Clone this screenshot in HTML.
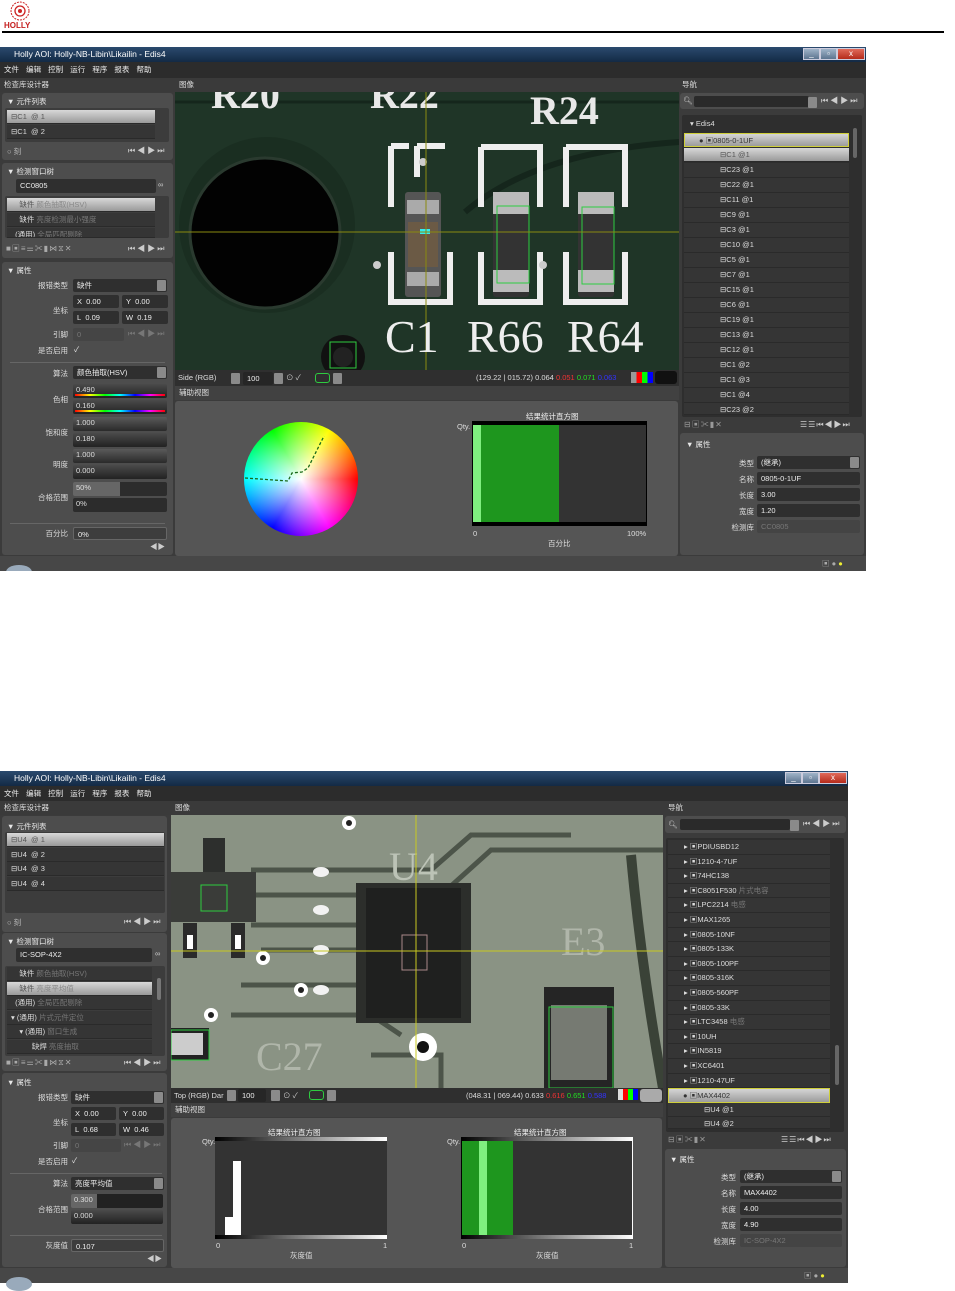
<!DOCTYPE html>
<html><head><meta charset="utf-8"><style>
*{margin:0;padding:0;box-sizing:border-box}
body{width:955px;height:1283px;background:#fff;position:relative;overflow:hidden;font-family:"Liberation Sans","Noto Sans CJK SC",sans-serif;font-size:7.5px;color:#e8e8e8}
.a{position:absolute}
.win{background:#3b3b3b}
.title{background:linear-gradient(#2b4a6e,#132a45);color:#fff;font-size:8.5px;line-height:15px;padding-left:14px}
.menu{background:#2c2c2c;color:#eee;font-size:7.5px;line-height:15px;padding-left:4px;word-spacing:5px}
.hdr{background:#3a3a3a;color:#ddd;line-height:13px;padding-left:4px}
.pan{background:#4d4d4d;border-radius:3px}
.box{background:#3c3c3c;border-radius:2px}
.row{background:#353535;border-bottom:1px solid #2a2a2a;line-height:14px;padding-left:4px;color:#ddd;height:14px}
.sel{background:linear-gradient(#d8d8d8,#9a9a9a);color:#555}
.fld{background:#2f2f2f;border-radius:2px;line-height:13px;padding-left:4px;color:#eee;height:13px}
.lbl{text-align:right;color:#ddd;line-height:13px}
.dd{background:#8a8a8a;width:9px;height:11px;border-radius:1px}
.sl{background:linear-gradient(#4a4a4a,#222);border-radius:2px;height:14px;color:#ddd;padding-left:3px;line-height:11px}
.sep{height:1px;background:#666}
.nav{color:#ccc;letter-spacing:2px;font-size:8px}
.tb{background:#2f2f2f}
.wb{background:linear-gradient(#9fb3c8,#5d7590);border:1px solid #ccd;height:12px;width:17px;color:#fff;text-align:center;line-height:10px;font-size:8px}
</style></head><body>

<!-- top header -->
<svg class="a" style="left:8px;top:0px" width="34" height="24"><circle cx="12" cy="11" r="9" fill="none" stroke="#c22" stroke-width="1" stroke-dasharray="2 1"/><circle cx="12" cy="11" r="5" fill="none" stroke="#c22" stroke-width="1.3"/><circle cx="12" cy="11" r="2" fill="#c22"/></svg>
<div class="a" style="left:4px;top:21px;color:#c41e1e;font-weight:bold;font-size:8px">HOLLY</div>
<div class="a" style="left:2px;top:31px;width:942px;height:2px;background:#000"></div>

<!-- ============ SCREEN 1 ============ -->
<div class="a win" style="left:0;top:47px;width:866px;height:524px"></div>
<div class="a title" style="left:0;top:47px;width:866px;height:15px">Holly AOI: Holly-NB-Libin\Likailin - Edis4</div>
<div class="a wb" style="left:803px;top:48px">_</div>
<div class="a wb" style="left:820px;top:48px">▫</div>
<div class="a wb" style="left:837px;top:48px;width:28px;background:linear-gradient(#e06a5a,#b52b1b)">x</div>
<div class="a menu" style="left:0;top:62px;width:866px;height:16px">文件 编辑 控制 运行 程序 报表 帮助</div>
<div class="a hdr" style="left:0;top:78px;width:175px;height:14px">检查库设计器</div>
<div class="a hdr" style="left:175px;top:78px;width:505px;height:14px">图像</div>
<div class="a hdr" style="left:678px;top:78px;width:188px;height:14px">导航</div>

<!-- left panel 1 -->
<div class="a pan" style="left:2px;top:93px;width:171px;height:67px"></div>
<div class="a" style="left:7px;top:96px">▼ 元件列表</div>
<div class="a box" style="left:5px;top:108px;width:164px;height:34px"></div>
<div class="a row sel" style="left:7px;top:110px;width:148px">⊟C1 &nbsp;@ 1</div>
<div class="a row" style="left:7px;top:125px;width:148px">⊟C1 &nbsp;@ 2</div>
<div class="a" style="left:7px;top:146px;color:#bbb">○ 刻</div>
<div class="a nav" style="left:128px;top:145px">⏮◀▶⏭</div>
<div class="a pan" style="left:2px;top:163px;width:171px;height:95px"></div>
<div class="a" style="left:7px;top:166px">▼ 检测窗口树</div>
<div class="a fld" style="left:16px;top:179px;width:140px;height:14px">CC0805</div>
<div class="a" style="left:158px;top:180px;color:#ccc">∞</div>
<div class="a box" style="left:5px;top:196px;width:164px;height:42px"></div>
<div class="a row sel" style="left:7px;top:198px;width:148px">&nbsp;&nbsp;&nbsp;&nbsp;缺件 <span style="color:#888">颜色抽取(HSV)</span></div>
<div class="a row" style="left:7px;top:213px;width:148px">&nbsp;&nbsp;&nbsp;&nbsp;缺件 <span style="color:#777">亮度检测最小强度</span></div>
<div class="a row" style="left:7px;top:228px;width:148px;height:10px;overflow:hidden">&nbsp;&nbsp;(通用) <span style="color:#777">全局匹配剔除</span></div>
<div class="a nav" style="left:6px;top:243px;color:#aaa;letter-spacing:1px">■▣≡⚌✂▮⋈⧖✕</div>
<div class="a nav" style="left:128px;top:243px">⏮◀▶⏭</div>

<div class="a pan" style="left:2px;top:262px;width:171px;height:293px"></div>
<div class="a" style="left:7px;top:265px">▼ 属性</div>
<div class="a lbl" style="left:10px;top:279px;width:58px">报错类型</div>
<div class="a fld" style="left:73px;top:279px;width:94px">缺件</div><div class="a dd" style="left:157px;top:280px"></div>
<div class="a lbl" style="left:10px;top:304px;width:58px">坐标</div>
<div class="a fld" style="left:73px;top:295px;width:46px">X&nbsp; 0.00</div>
<div class="a fld" style="left:122px;top:295px;width:46px">Y&nbsp; 0.00</div>
<div class="a fld" style="left:73px;top:311px;width:46px">L&nbsp; 0.09</div>
<div class="a fld" style="left:122px;top:311px;width:46px">W&nbsp; 0.19</div>
<div class="a lbl" style="left:10px;top:328px;width:58px">引脚</div>
<div class="a fld" style="left:73px;top:328px;width:51px;background:#454545;color:#777">0</div>
<div class="a nav" style="left:128px;top:328px;color:#777">⏮◀▶⏭</div>
<div class="a lbl" style="left:10px;top:344px;width:58px">是否启用</div>
<div class="a" style="left:74px;top:344px">✓</div>
<div class="a sep" style="left:10px;top:362px;width:155px"></div>
<div class="a lbl" style="left:10px;top:367px;width:58px">算法</div>
<div class="a fld" style="left:73px;top:366px;width:94px">颜色抽取(HSV)</div><div class="a dd" style="left:157px;top:367px"></div>
<div class="a lbl" style="left:10px;top:393px;width:58px">色相</div>
<div class="a sl" style="left:73px;top:384px;width:94px">0.490<div class="a" style="left:2px;top:10px;width:90px;height:2px;background:linear-gradient(90deg,red,yellow,lime,cyan,blue,magenta,red)"></div></div>
<div class="a sl" style="left:73px;top:400px;width:94px">0.160<div class="a" style="left:2px;top:10px;width:90px;height:2px;background:linear-gradient(90deg,red,yellow,lime,cyan,blue,magenta,red)"></div></div>
<div class="a lbl" style="left:10px;top:426px;width:58px">饱和度</div>
<div class="a sl" style="left:73px;top:417px;width:94px;background:linear-gradient(#5a5a5a,#2a2a2a)">1.000</div>
<div class="a sl" style="left:73px;top:433px;width:94px">0.180</div>
<div class="a lbl" style="left:10px;top:458px;width:58px">明度</div>
<div class="a sl" style="left:73px;top:449px;width:94px;background:linear-gradient(#5a5a5a,#2a2a2a)">1.000</div>
<div class="a sl" style="left:73px;top:465px;width:94px">0.000</div>
<div class="a lbl" style="left:10px;top:491px;width:58px">合格范围</div>
<div class="a sl" style="left:73px;top:482px;width:94px;background:linear-gradient(90deg,#666 50%,#2c2c2c 50%)">50%</div>
<div class="a sl" style="left:73px;top:498px;width:94px;background:#2c2c2c">0%</div>
<div class="a sep" style="left:10px;top:523px;width:155px"></div>
<div class="a lbl" style="left:10px;top:527px;width:58px">百分比</div>
<div class="a fld" style="left:73px;top:527px;width:94px;background:#3d3d3d;border:1px solid #666">0%</div>
<div class="a" style="left:150px;top:541px;color:#ccc">◀▶</div>

<!-- image 1 -->
<svg class="a" style="left:175px;top:92px" width="504" height="278" viewBox="0 0 504 278">
<rect width="504" height="278" fill="#1f3527"/>
<path d="M290 120 Q360 60 504 50" stroke="#15261c" stroke-width="6" fill="none"/>
<path d="M0 10 H504" stroke="#15261c" stroke-width="3"/>
<circle cx="92" cy="133" r="88" fill="#1a2e21"/>
<circle cx="90" cy="141" r="75" fill="#020202" stroke="#2a3a2f" stroke-width="3"/>
<circle cx="168" cy="265" r="22" fill="#111"/><circle cx="168" cy="265" r="10" fill="#222"/>
<rect x="155" y="250" width="26" height="26" fill="none" stroke="#2ecc40" stroke-width="1"/>
<text x="36" y="16" fill="#e8e8e8" font-family="Liberation Serif" font-size="40" font-weight="bold">R20</text>
<text x="195" y="16" fill="#e8e8e8" font-family="Liberation Serif" font-size="40" font-weight="bold">R22</text>
<text x="355" y="32" fill="#e8e8e8" font-family="Liberation Serif" font-size="40" font-weight="bold">R24</text>
<g fill="none" stroke="#eee" stroke-width="6">
<path d="M242 54 V85 M242 54 H270 M216 54 H234 M216 54 V115 M216 160 V210 H275 V160"/>
<path d="M306 55 V115 M306 160 V210 H365 V160 M306 55 H365 V115"/>
<path d="M391 55 V115 M391 160 V210 H450 V160 M391 55 H450 V115"/>
</g>
<circle cx="248" cy="70" r="4" fill="#ccc"/><circle cx="202" cy="173" r="4" fill="#ccc"/><circle cx="368" cy="173" r="4" fill="#ccc"/>
<rect x="230" y="100" width="36" height="105" fill="#555" rx="3"/>
<rect x="233" y="130" width="30" height="45" fill="#6b5a45"/>
<rect x="232" y="108" width="32" height="14" fill="#aaa"/><rect x="232" y="180" width="32" height="14" fill="#aaa"/>
<rect x="318" y="100" width="36" height="105" fill="#333" rx="3"/>
<rect x="318" y="100" width="36" height="22" fill="#bbb"/><rect x="318" y="178" width="36" height="22" fill="#bbb"/>
<rect x="403" y="100" width="36" height="105" fill="#333" rx="3"/>
<rect x="403" y="100" width="36" height="22" fill="#bbb"/><rect x="403" y="178" width="36" height="22" fill="#bbb"/>
<rect x="322" y="114" width="32" height="77" fill="none" stroke="#2ecc40"/>
<rect x="407" y="115" width="32" height="77" fill="none" stroke="#2ecc40"/>
<rect x="245" y="137" width="10" height="5" fill="#3ee"/>
<line x1="251" y1="0" x2="251" y2="278" stroke="#8a8a10" stroke-width="1"/>
<line x1="0" y1="140" x2="504" y2="140" stroke="#8a8a10" stroke-width="1"/>
<text x="210" y="260" fill="#eee" font-family="Liberation Serif" font-size="46">C1</text>
<text x="292" y="260" fill="#eee" font-family="Liberation Serif" font-size="46">R66</text>
<text x="392" y="260" fill="#eee" font-family="Liberation Serif" font-size="46">R64</text>
</svg>
<div class="a tb" style="left:175px;top:370px;width:504px;height:16px"></div>
<div class="a" style="left:178px;top:373px;color:#ddd">Side (RGB)</div>
<div class="a dd" style="left:231px;top:373px"></div>
<div class="a fld" style="left:243px;top:372px;width:30px;background:#262626">100</div>
<div class="a dd" style="left:274px;top:373px"></div>
<div class="a" style="left:286px;top:372px;color:#ccc">⊙ ✓</div>
<div class="a" style="left:315px;top:373px;width:15px;height:10px;border:1px solid #2ecc40;border-radius:3px"></div><div class="a dd" style="left:333px;top:373px"></div>
<div class="a" style="left:476px;top:373px;color:#ddd">(129.22 | 015.72) 0.064 <span style="color:#e33">0.051</span> <span style="color:#2d2">0.071</span> <span style="color:#33f">0.063</span></div>
<div class="a" style="left:631px;top:372px;width:22px;height:11px;background:linear-gradient(90deg,#999 25%,red 25%,red 50%,lime 50%,lime 75%,blue 75%)"></div>
<div class="a" style="left:655px;top:371px;width:22px;height:13px;background:#111;border-radius:3px"></div>
<div class="a hdr" style="left:175px;top:386px;width:504px;height:14px;background:#414141">辅助视图</div>
<div class="a pan" style="left:175px;top:401px;width:503px;height:155px;background:#555"></div>
<div class="a" style="left:244px;top:422px;width:114px;height:114px;border-radius:50%;background:radial-gradient(circle,#fff 0%,rgba(255,255,255,0) 70%),conic-gradient(from 90deg,red,magenta,blue,cyan,lime,yellow,red)"></div>
<svg class="a" style="left:244px;top:422px" width="114" height="114"><path d="M1 56 L44 59 L48 51 L58 50 L64 46 L80 14" fill="none" stroke="#1a6a1a" stroke-width="1.3" stroke-dasharray="3 2"/></svg>
<div class="a" style="left:526px;top:411px;color:#eee">结果统计直方图</div>
<div class="a" style="left:457px;top:422px;color:#ddd">Qty.</div>
<div class="a" style="left:472px;top:421px;width:175px;height:105px;background:#000"></div>
<div class="a" style="left:473px;top:425px;width:173px;height:97px;background:#333"></div>
<div class="a" style="left:473px;top:425px;width:8px;height:97px;background:#7fef7f"></div>
<div class="a" style="left:481px;top:425px;width:78px;height:97px;background:#1e961e"></div>
<div class="a" style="left:473px;top:529px;color:#ddd">0</div>
<div class="a" style="left:627px;top:529px;color:#ddd">100%</div>
<div class="a" style="left:548px;top:538px;color:#ddd">百分比</div>

<!-- right panel 1 -->
<div class="a pan" style="left:680px;top:93px;width:184px;height:16px"></div>
<div class="a" style="left:683px;top:96px;color:#ccc">🔍︎</div>
<div class="a fld" style="left:694px;top:96px;width:115px;height:11px;background:#2a2a2a"></div><div class="a dd" style="left:808px;top:97px"></div>
<div class="a nav" style="left:821px;top:95px">⏮◀▶⏭</div>
<div class="a box" style="left:682px;top:115px;width:180px;height:302px;background:#2e2e2e"></div>
<div class="a" style="left:690px;top:119px;color:#ddd">▾ Edis4</div>
<div class="a row" style="left:684px;top:133px;width:165px;height:14px;background:linear-gradient(#d5d5d5,#9c9c9c);color:#333;border:1px solid #cfcf3a;padding-left:14px">● ▣0805-0-1UF</div>
<div class="a row sel" style="left:684px;top:148px;width:165px;padding-left:36px">⊟C1 @1</div>
<div class="a" style="left:684px;top:163px;width:165px;line-height:15px;color:#ddd">
<div class="row" style="padding-left:36px;height:15px">⊟C23 @1</div><div class="row" style="padding-left:36px;height:15px">⊟C22 @1</div><div class="row" style="padding-left:36px;height:15px">⊟C11 @1</div><div class="row" style="padding-left:36px;height:15px">⊟C9 @1</div><div class="row" style="padding-left:36px;height:15px">⊟C3 @1</div><div class="row" style="padding-left:36px;height:15px">⊟C10 @1</div><div class="row" style="padding-left:36px;height:15px">⊟C5 @1</div><div class="row" style="padding-left:36px;height:15px">⊟C7 @1</div><div class="row" style="padding-left:36px;height:15px">⊟C15 @1</div><div class="row" style="padding-left:36px;height:15px">⊟C6 @1</div><div class="row" style="padding-left:36px;height:15px">⊟C19 @1</div><div class="row" style="padding-left:36px;height:15px">⊟C13 @1</div><div class="row" style="padding-left:36px;height:15px">⊟C12 @1</div><div class="row" style="padding-left:36px;height:15px">⊟C1 @2</div><div class="row" style="padding-left:36px;height:15px">⊟C1 @3</div><div class="row" style="padding-left:36px;height:15px">⊟C1 @4</div><div class="row" style="padding-left:36px;height:12px;overflow:hidden">⊟C23 @2</div></div>
<div class="a" style="left:853px;top:128px;width:4px;height:30px;background:#666;border-radius:2px"></div>
<div class="a nav" style="left:684px;top:419px;color:#999;letter-spacing:1px">⊟▣✂▮✕</div>
<div class="a nav" style="left:800px;top:419px;letter-spacing:1px">☰☰⏮◀▶⏭</div>
<div class="a pan" style="left:680px;top:433px;width:184px;height:122px"></div>
<div class="a" style="left:686px;top:439px">▼ 属性</div>
<div class="a lbl" style="left:700px;top:457px;width:54px">类型</div><div class="a fld" style="left:757px;top:456px;width:103px">(继承)</div><div class="a dd" style="left:850px;top:457px"></div>
<div class="a lbl" style="left:700px;top:473px;width:54px">名称</div><div class="a fld" style="left:757px;top:472px;width:103px">0805-0-1UF</div>
<div class="a lbl" style="left:700px;top:489px;width:54px">长度</div><div class="a fld" style="left:757px;top:488px;width:103px">3.00</div>
<div class="a lbl" style="left:700px;top:505px;width:54px">宽度</div><div class="a fld" style="left:757px;top:504px;width:103px">1.20</div>
<div class="a lbl" style="left:700px;top:521px;width:54px">检测库</div><div class="a fld" style="left:757px;top:520px;width:103px;background:#444;color:#777">CC0805</div>
<div class="a" style="left:0;top:556px;width:866px;height:15px;background:#474747"></div>
<div class="a" style="left:6px;top:565px;width:26px;height:14px;border-radius:50%;background:#9ab;"></div>
<div class="a" style="left:822px;top:558px;color:#aaa">▣ ● <span style="color:#ee3">●</span></div>
<div class="a" style="left:0;top:571px;width:870px;height:30px;background:#fff"></div>

<!-- ============ SCREEN 2 ============ -->
<div class="a win" style="left:0;top:771px;width:848px;height:512px"></div>
<div class="a title" style="left:0;top:771px;width:848px;height:15px">Holly AOI: Holly-NB-Libin\Likailin - Edis4</div>
<div class="a wb" style="left:785px;top:772px">_</div>
<div class="a wb" style="left:802px;top:772px">▫</div>
<div class="a wb" style="left:819px;top:772px;width:28px;background:linear-gradient(#e06a5a,#b52b1b)">x</div>
<div class="a menu" style="left:0;top:786px;width:848px;height:15px">文件 编辑 控制 运行 程序 报表 帮助</div>
<div class="a hdr" style="left:0;top:801px;width:171px;height:14px">检查库设计器</div>
<div class="a hdr" style="left:171px;top:801px;width:493px;height:14px">图像</div>
<div class="a hdr" style="left:664px;top:801px;width:184px;height:14px">导航</div>

<div class="a pan" style="left:2px;top:816px;width:165px;height:116px"></div>
<div class="a" style="left:7px;top:821px">▼ 元件列表</div>
<div class="a box" style="left:5px;top:832px;width:160px;height:81px"></div>
<div class="a row sel" style="left:7px;top:833px;width:157px">⊟U4 &nbsp;@ 1</div>
<div class="a row" style="left:7px;top:848px;width:157px">⊟U4 &nbsp;@ 2</div>
<div class="a row" style="left:7px;top:862px;width:157px">⊟U4 &nbsp;@ 3</div>
<div class="a row" style="left:7px;top:877px;width:157px">⊟U4 &nbsp;@ 4</div>
<div class="a" style="left:7px;top:917px;color:#bbb">○ 刻</div>
<div class="a nav" style="left:124px;top:916px">⏮◀▶⏭</div>
<div class="a pan" style="left:2px;top:933px;width:165px;height:138px"></div>
<div class="a" style="left:7px;top:936px">▼ 检测窗口树</div>
<div class="a fld" style="left:16px;top:948px;width:136px;height:14px">IC-SOP-4X2</div>
<div class="a" style="left:155px;top:949px;color:#ccc">∞</div>
<div class="a box" style="left:5px;top:966px;width:160px;height:90px"></div>
<div class="a row" style="left:7px;top:967px;width:145px">&nbsp;&nbsp;&nbsp;&nbsp;缺件 <span style="color:#777">颜色抽取(HSV)</span></div>
<div class="a row sel" style="left:7px;top:982px;width:145px">&nbsp;&nbsp;&nbsp;&nbsp;缺件 <span style="color:#888">亮度平均值</span></div>
<div class="a row" style="left:7px;top:996px;width:145px">&nbsp;&nbsp;(通用) <span style="color:#777">全局匹配剔除</span></div>
<div class="a row" style="left:7px;top:1011px;width:145px">▾ (通用) <span style="color:#777">片式元件定位</span></div>
<div class="a row" style="left:7px;top:1025px;width:145px">&nbsp;&nbsp;&nbsp;&nbsp;▾ (通用) <span style="color:#777">窗口生成</span></div>
<div class="a row" style="left:7px;top:1040px;width:145px">&nbsp;&nbsp;&nbsp;&nbsp;&nbsp;&nbsp;&nbsp;&nbsp;&nbsp;&nbsp;缺焊 <span style="color:#777">亮度抽取</span></div>
<div class="a" style="left:157px;top:978px;width:4px;height:22px;background:#777;border-radius:2px"></div>
<div class="a nav" style="left:6px;top:1057px;color:#aaa;letter-spacing:1px">■▣≡⚌✂▮⋈⧖✕</div>
<div class="a nav" style="left:124px;top:1057px">⏮◀▶⏭</div>

<div class="a pan" style="left:2px;top:1073px;width:165px;height:194px"></div>
<div class="a" style="left:7px;top:1077px">▼ 属性</div>
<div class="a lbl" style="left:10px;top:1091px;width:58px">报错类型</div>
<div class="a fld" style="left:71px;top:1091px;width:93px">缺件</div><div class="a dd" style="left:154px;top:1092px"></div>
<div class="a lbl" style="left:10px;top:1116px;width:58px">坐标</div>
<div class="a fld" style="left:71px;top:1107px;width:45px">X&nbsp; 0.00</div>
<div class="a fld" style="left:119px;top:1107px;width:45px">Y&nbsp; 0.00</div>
<div class="a fld" style="left:71px;top:1123px;width:45px">L&nbsp; 0.68</div>
<div class="a fld" style="left:119px;top:1123px;width:45px">W&nbsp; 0.46</div>
<div class="a lbl" style="left:10px;top:1139px;width:58px">引脚</div>
<div class="a fld" style="left:71px;top:1139px;width:50px;background:#454545;color:#777">0</div>
<div class="a nav" style="left:124px;top:1139px;color:#777">⏮◀▶⏭</div>
<div class="a lbl" style="left:10px;top:1155px;width:58px">是否启用</div>
<div class="a" style="left:72px;top:1155px">✓</div>
<div class="a sep" style="left:10px;top:1173px;width:152px"></div>
<div class="a lbl" style="left:10px;top:1177px;width:58px">算法</div>
<div class="a fld" style="left:71px;top:1177px;width:93px">亮度平均值</div><div class="a dd" style="left:154px;top:1178px"></div>
<div class="a lbl" style="left:10px;top:1203px;width:58px">合格范围</div>
<div class="a sl" style="left:71px;top:1194px;width:92px;background:linear-gradient(90deg,#666 28%,#222 28%)">0.300</div>
<div class="a sl" style="left:71px;top:1210px;width:92px">0.000</div>
<div class="a sep" style="left:10px;top:1235px;width:152px"></div>
<div class="a lbl" style="left:10px;top:1239px;width:58px">灰度值</div>
<div class="a fld" style="left:71px;top:1239px;width:93px;background:#3d3d3d;border:1px solid #666">0.107</div>
<div class="a" style="left:147px;top:1253px;color:#ccc">◀▶</div>

<!-- image 2 -->
<svg class="a" style="left:171px;top:815px" width="492" height="273" viewBox="0 0 492 273">
<rect width="492" height="273" fill="#8a9384"/>
<g stroke="#4c5449" stroke-width="5" fill="none">
<path d="M80 55 H260 L300 20 H400"/><path d="M80 80 H270 L320 35 H492"/><path d="M0 60 H40"/>
<path d="M80 110 H200 L230 140 H260"/><path d="M90 135 H230"/><path d="M70 170 H210 L240 190"/>
<path d="M60 200 H200 L230 220"/><path d="M200 240 H270 V273"/><path d="M0 100 H30"/>
</g>
<path d="M460 40 Q470 150 492 273" stroke="#3a4237" stroke-width="10" fill="none"/>
<rect x="32" y="23" width="22" height="40" fill="#2d2f2d"/>
<rect x="0" y="57" width="85" height="50" fill="#3a3c39"/>
<rect x="12" y="108" width="14" height="35" fill="#2a2a2a"/><rect x="60" y="108" width="14" height="35" fill="#2a2a2a"/>
<rect x="16" y="120" width="6" height="14" fill="#fff"/><rect x="64" y="120" width="6" height="14" fill="#fff"/>
<rect x="30" y="70" width="26" height="26" fill="none" stroke="#2ecc40"/>
<rect x="185" y="68" width="115" height="140" fill="#2c2e2b"/>
<rect x="195" y="73" width="95" height="130" fill="#1f201f"/>
<g fill="#f2f2f2"><ellipse cx="150" cy="57" rx="8" ry="5"/><ellipse cx="150" cy="95" rx="8" ry="5"/><ellipse cx="150" cy="135" rx="8" ry="5"/><ellipse cx="150" cy="175" rx="8" ry="5"/></g>
<circle cx="178" cy="8" r="7" fill="#fff"/><circle cx="178" cy="8" r="3" fill="#222"/>
<circle cx="92" cy="143" r="7" fill="#fff"/><circle cx="92" cy="143" r="3" fill="#222"/>
<circle cx="130" cy="175" r="7" fill="#fff"/><circle cx="130" cy="175" r="3" fill="#222"/>
<circle cx="40" cy="200" r="7" fill="#fff"/><circle cx="40" cy="200" r="3" fill="#222"/>
<circle cx="252" cy="232" r="14" fill="#fff"/><circle cx="252" cy="232" r="6" fill="#111"/>
<rect x="0" y="213" width="38" height="32" fill="#222"/><rect x="0" y="218" width="32" height="22" fill="#ccc"/>
<rect x="0" y="215" width="38" height="30" fill="none" stroke="#2ecc40"/>
<rect x="373" y="172" width="70" height="101" fill="#252525"/><rect x="380" y="190" width="56" height="75" fill="#767a72"/>
<rect x="378" y="192" width="64" height="81" fill="none" stroke="#2ecc40"/>
<text x="218" y="65" fill="#bcc3b6" font-family="Liberation Serif" font-size="40">U4</text>
<text x="85" y="255" fill="#b0b6aa" font-family="Liberation Serif" font-size="40">C27</text>
<text x="390" y="140" fill="#b0b6aa" font-family="Liberation Serif" font-size="40">E3</text>
<rect x="231" y="120" width="25" height="35" fill="none" stroke="#a88"/>
<line x1="245" y1="0" x2="245" y2="273" stroke="#c8c820"/>
<line x1="0" y1="136" x2="492" y2="136" stroke="#c8c820"/>
</svg>
<div class="a tb" style="left:171px;top:1088px;width:492px;height:15px"></div>
<div class="a" style="left:174px;top:1091px;color:#ddd">Top (RGB) Dar</div>
<div class="a dd" style="left:227px;top:1090px"></div>
<div class="a fld" style="left:238px;top:1089px;width:28px;background:#262626">100</div>
<div class="a dd" style="left:271px;top:1090px"></div>
<div class="a" style="left:283px;top:1090px;color:#ccc">⊙ ✓</div>
<div class="a" style="left:309px;top:1090px;width:15px;height:10px;border:1px solid #2ecc40;border-radius:3px"></div><div class="a dd" style="left:327px;top:1090px"></div>
<div class="a" style="left:466px;top:1091px;color:#ddd">(048.31 | 069.44) 0.633 <span style="color:#e33">0.616</span> <span style="color:#2d2">0.651</span> <span style="color:#33f">0.588</span></div>
<div class="a" style="left:618px;top:1089px;width:20px;height:11px;background:linear-gradient(90deg,#ddd 25%,red 25%,red 50%,lime 50%,lime 75%,blue 75%)"></div>
<div class="a" style="left:640px;top:1089px;width:22px;height:13px;background:#aaa;border-radius:3px"></div>
<div class="a hdr" style="left:171px;top:1103px;width:492px;height:14px;background:#414141">辅助视图</div>
<div class="a pan" style="left:171px;top:1118px;width:491px;height:150px;background:#555"></div>
<div class="a" style="left:268px;top:1127px;color:#eee">结果统计直方图</div>
<div class="a" style="left:202px;top:1137px;color:#ddd">Qty.</div>
<div class="a" style="left:215px;top:1137px;width:172px;height:102px;background:linear-gradient(90deg,#000,#fff)"></div>
<div class="a" style="left:215px;top:1141px;width:172px;height:94px;background:#333"></div>
<div class="a" style="left:225px;top:1217px;width:8px;height:18px;background:#fff"></div>
<div class="a" style="left:233px;top:1161px;width:8px;height:74px;background:#fff"></div>
<div class="a" style="left:216px;top:1241px;color:#ddd">0</div>
<div class="a" style="left:383px;top:1241px;color:#ddd">1</div>
<div class="a" style="left:290px;top:1250px;color:#ddd">灰度值</div>
<div class="a" style="left:514px;top:1127px;color:#eee">结果统计直方图</div>
<div class="a" style="left:447px;top:1137px;color:#ddd">Qty.</div>
<div class="a" style="left:461px;top:1137px;width:172px;height:102px;background:linear-gradient(90deg,#000,#fff)"></div>
<div class="a" style="left:462px;top:1141px;width:170px;height:94px;background:#333"></div>
<div class="a" style="left:462px;top:1141px;width:51px;height:94px;background:#1e961e"></div>
<div class="a" style="left:479px;top:1141px;width:8px;height:94px;background:#7fef7f"></div>
<div class="a" style="left:462px;top:1241px;color:#ddd">0</div>
<div class="a" style="left:629px;top:1241px;color:#ddd">1</div>
<div class="a" style="left:536px;top:1250px;color:#ddd">灰度值</div>

<!-- right panel 2 -->
<div class="a pan" style="left:665px;top:816px;width:181px;height:17px"></div>
<div class="a" style="left:668px;top:820px;color:#ccc">🔍︎</div>
<div class="a fld" style="left:680px;top:819px;width:110px;height:11px;background:#2a2a2a"></div><div class="a dd" style="left:790px;top:820px"></div>
<div class="a nav" style="left:803px;top:818px">⏮◀▶⏭</div>
<div class="a box" style="left:666px;top:838px;width:178px;height:294px;background:#2e2e2e"></div>
<div class="a" style="left:668px;top:840px;width:162px;color:#ddd">
<div class="row" style="height:14.6px;padding-left:16px">▸ ▣PDIUSBD12</div><div class="row" style="height:14.6px;padding-left:16px">▸ ▣1210-4-7UF</div><div class="row" style="height:14.6px;padding-left:16px">▸ ▣74HC138</div><div class="row" style="height:14.6px;padding-left:16px">▸ ▣C8051F530 <span style="color:#777">片式电容</span></div><div class="row" style="height:14.6px;padding-left:16px">▸ ▣LPC2214 <span style="color:#777">电感</span></div><div class="row" style="height:14.6px;padding-left:16px">▸ ▣MAX1265</div><div class="row" style="height:14.6px;padding-left:16px">▸ ▣0805-10NF</div><div class="row" style="height:14.6px;padding-left:16px">▸ ▣0805-133K</div><div class="row" style="height:14.6px;padding-left:16px">▸ ▣0805-100PF</div><div class="row" style="height:14.6px;padding-left:16px">▸ ▣0805-316K</div><div class="row" style="height:14.6px;padding-left:16px">▸ ▣0805-560PF</div><div class="row" style="height:14.6px;padding-left:16px">▸ ▣0805-33K</div><div class="row" style="height:14.6px;padding-left:16px">▸ ▣LTC3458 <span style="color:#777">电感</span></div><div class="row" style="height:14.6px;padding-left:16px">▸ ▣10UH</div><div class="row" style="height:14.6px;padding-left:16px">▸ ▣IN5819</div><div class="row" style="height:14.6px;padding-left:16px">▸ ▣XC6401</div><div class="row" style="height:14.6px;padding-left:16px">▸ ▣1210-47UF</div>
<div class="row" style="height:14.6px;padding-left:14px;background:linear-gradient(#d5d5d5,#9c9c9c);color:#333;border:1px solid #cfcf3a">● ▣MAX4402</div>
<div class="row" style="height:14.6px;padding-left:36px">⊟U4 @1</div><div class="row" style="height:12px;padding-left:36px;overflow:hidden">⊟U4 @2</div></div>
<div class="a" style="left:835px;top:1045px;width:4px;height:40px;background:#666;border-radius:2px"></div>
<div class="a nav" style="left:668px;top:1134px;color:#999;letter-spacing:1px">⊟▣✂▮✕</div>
<div class="a nav" style="left:781px;top:1134px;letter-spacing:1px">☰☰⏮◀▶⏭</div>
<div class="a pan" style="left:665px;top:1149px;width:181px;height:118px"></div>
<div class="a" style="left:670px;top:1154px">▼ 属性</div>
<div class="a lbl" style="left:682px;top:1171px;width:54px">类型</div><div class="a fld" style="left:740px;top:1170px;width:102px">(继承)</div><div class="a dd" style="left:832px;top:1171px"></div>
<div class="a lbl" style="left:682px;top:1187px;width:54px">名称</div><div class="a fld" style="left:740px;top:1186px;width:102px">MAX4402</div>
<div class="a lbl" style="left:682px;top:1203px;width:54px">长度</div><div class="a fld" style="left:740px;top:1202px;width:102px">4.00</div>
<div class="a lbl" style="left:682px;top:1219px;width:54px">宽度</div><div class="a fld" style="left:740px;top:1218px;width:102px">4.90</div>
<div class="a lbl" style="left:682px;top:1235px;width:54px">检测库</div><div class="a fld" style="left:740px;top:1234px;width:102px;background:#444;color:#777">IC-SOP-4X2</div>
<div class="a" style="left:0;top:1268px;width:848px;height:15px;background:#474747"></div>
<div class="a" style="left:6px;top:1277px;width:26px;height:14px;border-radius:50%;background:#9ab"></div>
<div class="a" style="left:804px;top:1270px;color:#aaa">▣ ● <span style="color:#ee3">●</span></div>
</body></html>
